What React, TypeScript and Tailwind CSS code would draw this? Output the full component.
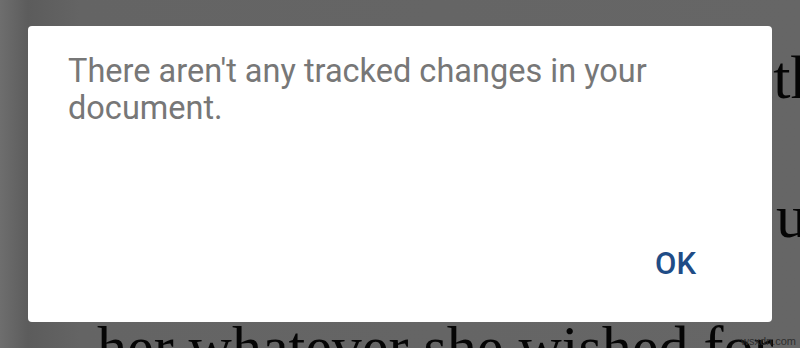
import React from "react";

export default function App() {
  return (
    <div className="relative w-[800px] h-[348px] overflow-hidden bg-[linear-gradient(to_right,#6e6e6e,#5c5c5c_28px,#646464_80px,#666666)]">
      <div className="font-['Liberation_Serif',serif] text-[62px] leading-none text-[#050505] whitespace-nowrap">
        <div className="pt-[46px] pl-[756px]">ith</div>
        <div className="pt-[77px] pl-[776px]">u</div>
        <div className="pt-[70px] pl-[97px] text-[60px]">her whatever she wished for</div>
      </div>

      <div className="absolute left-[28px] top-[26px] w-[744px] h-[296px] bg-white rounded-[4px] flex flex-col pt-[27px] pb-[40px]">
        <p className="px-[40px] font-['Roboto',sans-serif] text-[32.5px] leading-[37px] text-[#777777]">
          There aren't any tracked changes in your
          <br />
          document.
        </p>
        <div className="mt-auto flex justify-end pr-[76px]">
          <button className="font-['Roboto',sans-serif] font-medium text-[31px] leading-[37px] text-[#1f4c86]">
            OK
          </button>
        </div>
      </div>

      <span className="absolute left-[741px] top-[334px] font-['Liberation_Sans',sans-serif] text-[11px] leading-[14px] text-[#2e2e2e]">
        wsxdn.com
      </span>
    </div>
  );
}
